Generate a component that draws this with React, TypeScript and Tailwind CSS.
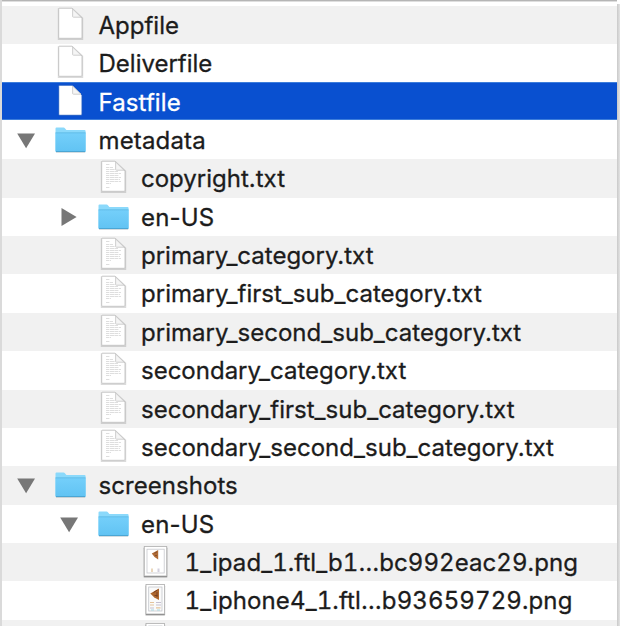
type Kind = "blank" | "text" | "folder" | "tablet" | "phone";

interface Item {
  name: string;
  kind: Kind;
  indent: string;
  arrow?: "down" | "right";
  selected?: boolean;
  tracking?: string;
}

const L0 = "pl-[6px]";
const L1 = "pl-[48.5px]";
const L2 = "pl-[91px]";

const items: Item[] = [
  { name: "Appfile", kind: "blank", indent: L0 },
  { name: "Deliverfile", kind: "blank", indent: L0 },
  { name: "Fastfile", kind: "blank", indent: L0, selected: true, tracking: "tracking-[0.1px]" },
  { name: "metadata", kind: "folder", indent: L0, arrow: "down", tracking: "tracking-[0.15px]" },
  { name: "copyright.txt", kind: "text", indent: L1 },
  { name: "en-US", kind: "folder", indent: L1, arrow: "right", tracking: "tracking-[0.2px]" },
  { name: "primary_category.txt", kind: "text", indent: L1 },
  { name: "primary_first_sub_category.txt", kind: "text", indent: L1, tracking: "tracking-[0.02px]" },
  { name: "primary_second_sub_category.txt", kind: "text", indent: L1, tracking: "tracking-[0.02px]" },
  { name: "secondary_category.txt", kind: "text", indent: L1 },
  { name: "secondary_first_sub_category.txt", kind: "text", indent: L1, tracking: "tracking-[0.02px]" },
  { name: "secondary_second_sub_category.txt", kind: "text", indent: L1, tracking: "tracking-[0.02px]" },
  { name: "screenshots", kind: "folder", indent: L0, arrow: "down", tracking: "tracking-[0.05px]" },
  { name: "en-US", kind: "folder", indent: L1, arrow: "down", tracking: "tracking-[0.2px]" },
  { name: "1_ipad_1.ftl_b1…bc992eac29.png", kind: "tablet", indent: L2, tracking: "tabular-nums tracking-[0.07px]" },
  { name: "1_iphone4_1.ftl…b93659729.png", kind: "phone", indent: L2, tracking: "tabular-nums tracking-[0.11px]" },
  { name: "", kind: "phone", indent: L2 },
];

function Page({ lines, selected }: { lines: boolean; selected?: boolean }) {
  return (
    <>
      {!selected && (
        <path d="M4.6 3H18.5L28.4 12V33.1H4.6Z" fill="none" stroke="#000" strokeOpacity=".14" strokeWidth="1.6" />
      )}
      <path
        d="M5.6 2.2H18L28 12V31.3Q28 32.3 27 32.3H5.6Q4.7 32.3 4.7 31.3V3.2Q4.7 2.2 5.6 2.2Z"
        fill="#fff"
        stroke={selected ? "#1b57c0" : "#c2c2c2"}
        strokeWidth=".9"
      />
      {lines && (
        <path
          d="M9 5.5h4M9 8.5h7M9 10.5h9M9 12.5h12M9 14.5h15M9 16.5h13M9 18.5h15M9 20.5h14M9 22.5h15M9 24.5h5M9 28.5h4"
          stroke="#d6d6d6"
          strokeWidth=".8"
          strokeDasharray="3 .6 5 .4"
        />
      )}
      <path d="M18.6 3V10.4Q18.6 11.2 19.4 11.2H27Z" fill="#f5f5f5" stroke="#cacaca" strokeWidth=".9" />
    </>
  );
}

function Folder() {
  return (
    <>
      <defs>
        <linearGradient id="folder" x1="0" y1="0" x2="0" y2="1">
          <stop offset="0" stopColor="#74cffa" />
          <stop offset="1" stopColor="#61c3f3" />
        </linearGradient>
      </defs>
      <path d="M1.5 7.4Q1.5 6.4 2.5 6.4H9.5Q10.5 6.4 11.1 7.4L12.4 9H30.5Q31.6 9 31.6 10.2V30.8H1.5Z" fill="#8bd9fb" />
      <path d="M1.5 12H31.6V29.8Q31.6 30.8 30.6 30.8H2.5Q1.5 30.8 1.5 29.8Z" fill="url(#folder)" />
      <path d="M1.5 11.8H31.6" stroke="#59b7e5" strokeWidth=".8" />
      <path d="M2 30.6H31.2" stroke="#48a5d4" strokeWidth="1" />
      <path d="M2 31.4H31.2" stroke="#000" strokeOpacity=".15" strokeWidth=".8" />
    </>
  );
}

function Shot({ phone }: { phone: boolean }) {
  return phone ? (
    <>
      <rect x="6.2" y="4.2" width="20" height="30.5" rx="1" fill="#000" fillOpacity=".22" />
      <rect x="7" y="3.5" width="18.5" height="29.5" fill="#fff" stroke="#b5b5b5" strokeWidth=".9" />
      <path d="M7 33.5H25.7" stroke="#929292" />
      <rect x="9.7" y="6" width="13.3" height="24" fill="#fafafa" stroke="#c3c5cb" strokeWidth=".8" />
      <path d="M11.3 12.5L20 7.5V19L15.3 16.5Z" fill="#ad672e" />
      <path d="M14.5 11.5L18.5 9M15.5 14.5h3M18 11v5" stroke="#773e20" strokeWidth="1" />
      <path d="M11 21.5H15M11 24H15M17 26.8H21.5" stroke="#e4c39b" strokeWidth="1.2" />
      <path d="M17 21.5H22M17 24H22M11 27H15" stroke="#c5bfd0" strokeWidth="1.2" />
      <path d="M12 29H15M18 29H21" stroke="#a7d9e2" />
    </>
  ) : (
    <>
      <rect x="4.5" y="4.2" width="24" height="30.5" rx="1" fill="#000" fillOpacity=".22" />
      <rect x="5.3" y="3.5" width="22.4" height="29.5" fill="#fff" stroke="#b5b5b5" strokeWidth=".9" />
      <path d="M5 33.5H28" stroke="#929292" />
      <rect x="8" y="6.2" width="17.2" height="23.8" fill="#fff" stroke="#c7c8cd" strokeWidth=".8" />
      <path d="M12.8 10.5L19.2 7V16.6L15.5 14Z" fill="#af6b35" />
      <path d="M15.5 10.2L18 9M16 12.5h2" stroke="#834b29" strokeWidth=".9" />
      <path d="M13 25.5V29" stroke="#ead7bd" strokeWidth="2" />
      <path d="M19.5 25.5V29" stroke="#d3cfdd" strokeWidth="2" />
    </>
  );
}

function Icon({ kind, selected }: { kind: Kind; selected?: boolean }) {
  return (
    <svg className="h-[38px] w-[33px] shrink-0" viewBox="0 0 33 38">
      {kind === "folder" && <Folder />}
      {(kind === "blank" || kind === "text") && <Page lines={kind === "text"} selected={selected} />}
      {(kind === "tablet" || kind === "phone") && <Shot phone={kind === "phone"} />}
    </svg>
  );
}

function Row({ item, striped }: { item: Item; striped: boolean }) {
  const tone = item.selected
    ? "bg-[#0950d0] text-white border-y border-[#3c7ddb] h-[37.4px] mb-px"
    : striped
      ? "bg-[#f1f1f1] text-[#1c1c1c] h-[38.4px]"
      : "bg-white text-[#1c1c1c] h-[38.4px]";
  return (
    <div className={`flex shrink-0 items-start overflow-hidden ${tone} ${item.indent}`}>
      <div className="mt-[12px] mr-[10px] h-[20px] w-[36px] shrink-0">
        {item.arrow && (
          <svg className="h-full w-full overflow-visible" viewBox="0 0 36 20">
            <path d={item.arrow === "down" ? "M9.2 .5H27L18.1 15.2Z" : "M10.5 -1.9V16.1L25.6 7.1Z"} fill="#777" />
          </svg>
        )}
      </div>
      <Icon kind={item.kind} selected={item.selected} />
      <span
        className={`whitespace-pre text-[24px] [-webkit-text-stroke:0.3px_currentColor] ${item.selected ? "leading-[39px]" : "leading-[40px]"} ${item.indent === L2 ? "ml-[12.5px]" : "ml-[11.5px]"} ${item.tracking ?? ""}`}
      >
        {item.name}
      </span>
    </div>
  );
}

export default function App() {
  return (
    <div className="flex h-[626px] w-[620px] overflow-hidden bg-white font-['Inter','Liberation_Sans',sans-serif]">
      <div className="flex w-[617px] flex-col overflow-hidden border-l-2 border-[#dadada]">
        <div className="h-[5.6px] shrink-0 border-t border-[#b5b5b5] bg-white">
          <div className="h-px bg-[#dedede]" />
        </div>
        {items.map((item, i) => (
          <Row key={i} item={item} striped={i % 2 === 0} />
        ))}
      </div>
      <div className="mt-1 w-[3px] bg-linear-to-r from-[#c9c9c9] to-[#e4e4e4]" />
    </div>
  );
}
